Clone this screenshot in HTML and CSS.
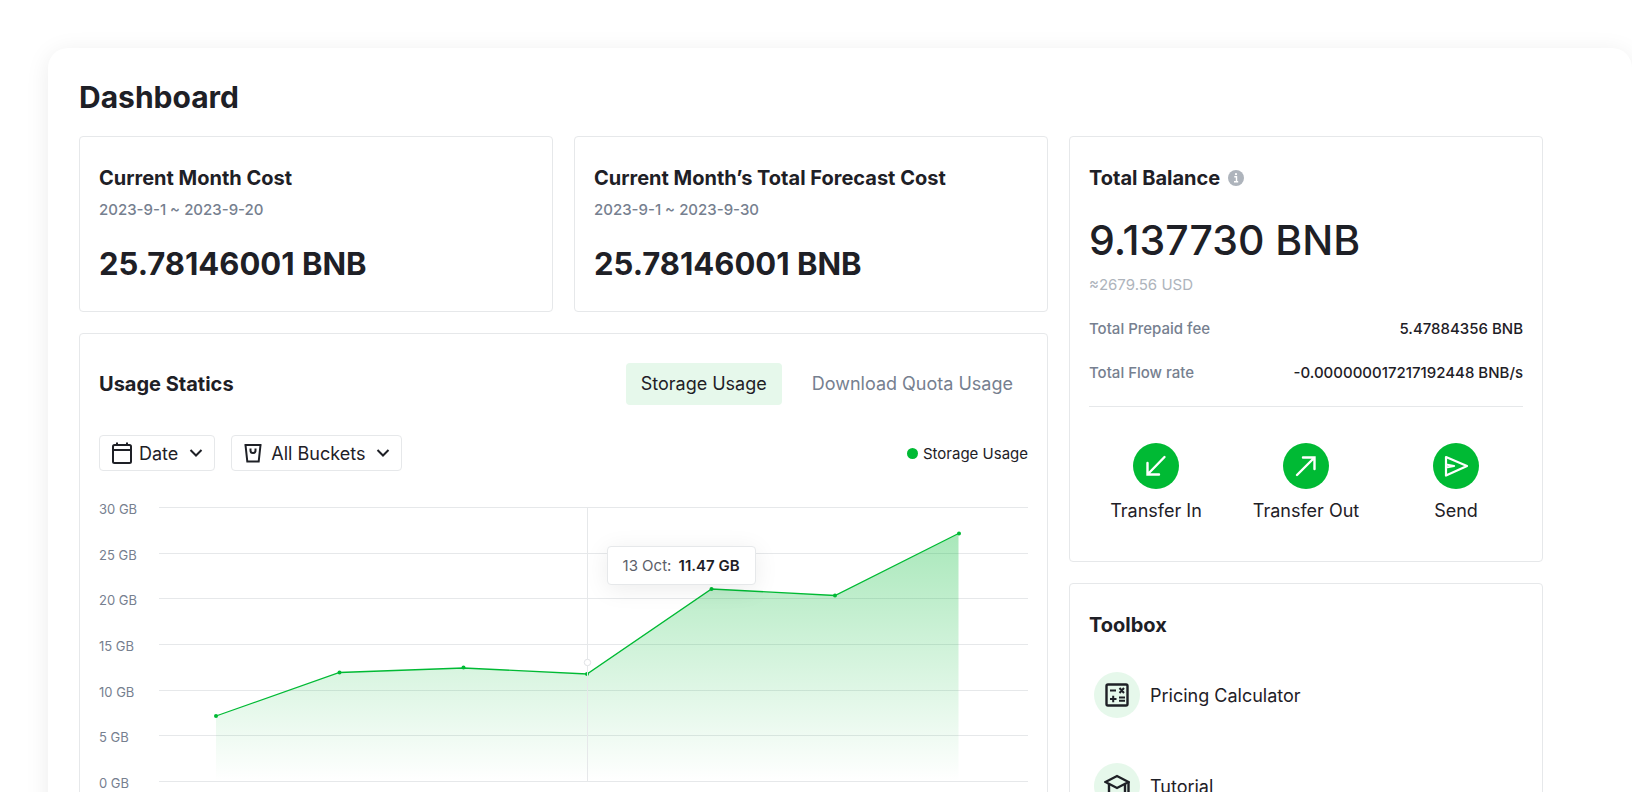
FILE: index.html
```html
<!DOCTYPE html>
<html lang="en">
<head>
  <meta charset="UTF-8" />
  <meta name="viewport" content="width=device-width, initial-scale=1.0"/>
  <title>Dashboard</title>
  <link rel="stylesheet" href="styles.css">
</head>
<body>
  <main class="panel">
    <h1 class="page-title">Dashboard</h1>

    <div class="dashboard">
      <div class="main-col">
        <div class="cost-row">
          <section class="card cost-card">
            <h2 class="card-title">Current Month Cost</h2>
            <p class="period">2023-9-1 ~ 2023-9-20</p>
            <p class="amount">25.78146001 BNB</p>
          </section>
          <section class="card cost-card">
            <h2 class="card-title">Current Month’s Total Forecast Cost</h2>
            <p class="period">2023-9-1 ~ 2023-9-30</p>
            <p class="amount">25.78146001 BNB</p>
          </section>
        </div>

        <section class="card usage-card">
          <div class="usage-head">
            <h2 class="card-title">Usage Statics</h2>
            <div class="tabs">
              <button class="tab active" type="button">Storage Usage</button>
              <button class="tab" type="button">Download Quota Usage</button>
            </div>
          </div>

          <div class="filters">
            <button class="filter" type="button">
              <svg class="filter-icon" viewBox="0 0 22 22" fill="none" stroke="currentColor" stroke-width="2">
                <rect x="2" y="3" width="18" height="18" rx="1.5"/>
                <path d="M2 8h18M6 0.5v3M16 0.5v3"/>
              </svg>
              Date
              <svg class="chevron" viewBox="0 0 14 14" fill="none" stroke="currentColor" stroke-width="2"><path d="M1.5 4l5.5 5.5L12.5 4"/></svg>
            </button>
            <button class="filter" type="button">
              <svg class="filter-icon" viewBox="0 0 22 22" fill="none" stroke="currentColor" stroke-width="2">
                <path d="M1.500 3h17M2.500 3l1.800 16.500h11.400L17.500 3"/>
                <path d="M7.500 6.500v2a2.500 2.500 0 0 0 5 0v-2"/>
              </svg>
              All Buckets
              <svg class="chevron" viewBox="0 0 14 14" fill="none" stroke="currentColor" stroke-width="2"><path d="M1.5 4l5.5 5.5L12.5 4"/></svg>
            </button>
            <div class="legend"><span class="legend-dot"></span>Storage Usage</div>
          </div>

          <div class="chart">
            <div class="axis">
              <span>30 GB</span>
              <span>25 GB</span>
              <span>20 GB</span>
              <span>15 GB</span>
              <span>10 GB</span>
              <span>5 GB</span>
              <span>0 GB</span>
            </div>
            <div class="plot">
              <svg class="plot-svg" viewBox="0 0 869 275">
                <defs>
                  <linearGradient id="area" x1="0" y1="0" x2="0" y2="1">
                    <stop offset="0" stop-color="#00ba34" stop-opacity="0.34"/>
                    <stop offset="1" stop-color="#00ba34" stop-opacity="0"/>
                  </linearGradient>
                </defs>
                <path class="grid" d="M0 0.5h869M0 46.5h869M0 91.5h869M0 137.5h869M0 183.5h869M0 228.5h869M0 274.5h869"/>
                <path fill="url(#area)" d="M57 209L180.500 165.500 304.500 161 428 167 552.500 82 676 88.500 799.500 26.500V274.500H57z"/>
                <path class="line" d="M57 209L180.500 165.500 304.500 161 428 167 552.500 82 676 88.500 799.500 26.500"/>
                <g class="dots">
                  <circle cx="57" cy="209" r="2"/>
                  <circle cx="180.500" cy="165.500" r="2"/>
                  <circle cx="304.500" cy="160.500" r="2"/>
                  <circle cx="428" cy="167" r="2"/>
                  <circle cx="552.500" cy="82" r="2"/>
                  <circle cx="676" cy="88.500" r="2"/>
                  <circle cx="800" cy="26.500" r="2"/>
                </g>
                <path class="grid" d="M428.5 0.5v274"/>
                <circle class="marker" cx="428.500" cy="155.500" r="3.200"/>
              </svg>
              <div class="tooltip">13 Oct: <b>11.47 GB</b></div>
            </div>
          </div>
        </section>
      </div>

      <div class="side-col">
        <section class="card balance-card">
          <h2 class="card-title">
            Total Balance
            <svg class="info" viewBox="0 0 16 16">
              <circle cx="8" cy="8" r="8" fill="#aeb4bc"/>
              <path d="M6.300 6.800h2.200v4.700M6 11.700h4.200" fill="none" stroke="#fff" stroke-width="1.400"/>
              <circle cx="8" cy="4.200" r="1.100" fill="#fff"/>
            </svg>
          </h2>
          <p class="balance">9.137730 BNB</p>
          <p class="fiat">≈2679.56 USD</p>
          <dl class="fees">
            <div class="fee"><dt>Total Prepaid fee</dt><dd>5.47884356 BNB</dd></div>
            <div class="fee"><dt>Total Flow rate</dt><dd>-0.000000017217192448 BNB/s</dd></div>
          </dl>
          <div class="actions">
            <button class="action" type="button">
              <span class="action-icon">
                <svg viewBox="0 0 24 24" fill="none" stroke="#fff" stroke-width="2.400" stroke-linecap="round"><path d="M20.500 3L4 20M3.500 9v11.500h11.500"/></svg>
              </span>
              Transfer In
            </button>
            <button class="action" type="button">
              <span class="action-icon">
                <svg viewBox="0 0 24 24" fill="none" stroke="#fff" stroke-width="2.400" stroke-linecap="round"><path d="M3 21L20 4M9 3.500h11.500v11.500"/></svg>
              </span>
              Transfer Out
            </button>
            <button class="action" type="button">
              <span class="action-icon">
                <svg viewBox="0 0 24 24" fill="none" stroke="#fff" stroke-width="2.200" stroke-linejoin="round"><path d="M2 3l21 9-21 9.500zM2 10.500l8 1.500-8 1.500"/></svg>
              </span>
              Send
            </button>
          </div>
        </section>

        <section class="card toolbox-card">
          <h2 class="card-title">Toolbox</h2>
          <ul class="tools">
            <li>
              <a class="tool" href="#">
                <span class="tool-icon">
                  <svg viewBox="0 0 26 26" fill="none" stroke="currentColor" stroke-width="2.400">
                    <rect x="2.500" y="2.500" width="21" height="21" rx="1.500"/>
                    <path d="M6 8.500h6M6 17h6.500M9.200 13.800v6.500M15 15.500h6M15 18.800h6M15.500 6l4.500 5M20 6l-4.500 5" stroke-width="2"/>
                  </svg>
                </span>
                Pricing Calculator
              </a>
            </li>
            <li>
              <a class="tool" href="#">
                <span class="tool-icon">
                  <svg viewBox="0 0 26 26" fill="none" stroke="currentColor" stroke-width="2.400">
                    <path d="M1.500 9L13 3l11.500 6L13 15z"/>
                    <path d="M5 11v9l8 4.500 8-4.500v-9M24.500 9v11"/>
                  </svg>
                </span>
                Tutorial
              </a>
            </li>
          </ul>
        </section>
      </div>
    </div>
  </main>
</body>
</html>
```
FILE: styles.css
```css
* {
  box-sizing: border-box;
}

body {
  margin: 0;
  height: 100vh;
  overflow: hidden;
  background: #fff;
  font-family: 'Inter', 'Liberation Sans', sans-serif;
  color: #1e2026;
}

h1, h2, p, ul, dl, dd {
  margin: 0;
  padding: 0;
}

button {
  font-family: inherit;
  color: inherit;
  background: none;
  border: none;
  padding: 0;
  cursor: pointer;
}

.panel {
  margin: 48px 0 0 48px;
  padding: 28px 89px 32px 31px;
  background: #fff;
  border-radius: 20px;
  box-shadow: 0 4px 24px rgba(0, 0, 0, 0.08);
}

.page-title {
  margin-bottom: 18px;
  font-size: 30px;
  line-height: 42px;
  font-weight: 700;
}

.dashboard {
  display: grid;
  grid-template-columns: repeat(3, minmax(0, 1fr));
  gap: 21px;
}

.main-col,
.side-col {
  display: flex;
  flex-direction: column;
  gap: 21px;
}

.main-col {
  grid-column: span 2;
}

.cost-row {
  display: grid;
  grid-template-columns: 1fr 1fr;
  gap: 21px;
}

.card {
  padding: 27px 19px;
  border: 1px solid #e6e8ea;
  border-radius: 4px;
}

.card-title {
  display: flex;
  align-items: center;
  gap: 8px;
  font-size: 20px;
  line-height: 28px;
  font-weight: 700;
}

.period {
  margin-top: 6px;
  font-size: 15px;
  line-height: 24px;
  font-weight: 500;
  color: #76808f;
}

.amount {
  margin-top: 21px;
  font-size: 31px;
  line-height: 41px;
  font-weight: 700;
}

/* Usage chart */
.usage-card {
  padding-top: 29px;
}

.usage-head {
  display: flex;
  align-items: center;
  justify-content: space-between;
}

.tabs {
  display: flex;
  gap: 15px;
}

.tab {
  padding: 8px 15px;
  border-radius: 4px;
  font-size: 18px;
  line-height: 26px;
  color: #76808f;
}

.tab.active {
  background: #e6f8eb;
  color: #1e2026;
}

.filters {
  display: flex;
  align-items: center;
  gap: 16px;
  margin-top: 30px;
}

.filter {
  display: flex;
  align-items: center;
  gap: 6px;
  height: 36px;
  padding: 0 11px;
  border: 1px solid #e6e8ea;
  border-radius: 4px;
  font-size: 18px;
}

.filter-icon {
  width: 22px;
  height: 22px;
}

.chevron {
  width: 14px;
  height: 14px;
  margin-left: 5px;
}

.legend {
  display: flex;
  align-items: center;
  gap: 5px;
  margin-left: auto;
  font-size: 15px;
}

.legend-dot {
  width: 11px;
  height: 11px;
  border-radius: 50%;
  background: #00ba34;
}

.chart {
  display: flex;
  margin-top: 36px;
}

.axis {
  display: flex;
  flex-direction: column;
  justify-content: space-between;
  width: 60px;
  margin: -7px 0 -10px;
  font-size: 13px;
  line-height: 18px;
  color: #76808f;
}

.plot {
  position: relative;
  flex: 1;
}

.plot-svg {
  display: block;
  width: 100%;
}

.grid {
  stroke: #e6e8ea;
  fill: none;
}

.line {
  fill: none;
  stroke: #00ba34;
  stroke-width: 1.3;
}

.dots {
  fill: #00ba34;
}

.marker {
  fill: #fff;
  stroke: #e0e2e5;
}

.tooltip {
  position: absolute;
  left: 51.5%;
  top: 14%;
  padding: 8px 15px;
  border: 1px solid #e6e8ea;
  border-radius: 4px;
  background: #fff;
  box-shadow: 0 4px 24px rgba(0, 0, 0, 0.08);
  font-size: 15px;
  line-height: 21px;
  color: #5c6069;
  white-space: nowrap;
}

.tooltip b {
  margin-left: 3px;
  font-weight: 600;
  color: #1e2026;
}

/* Balance */
.info {
  width: 16px;
  height: 16px;
}

.balance {
  margin-top: 20px;
  font-size: 41px;
  line-height: 56px;
  font-weight: 500;
}

.fiat {
  margin-top: 5px;
  font-size: 15px;
  line-height: 24px;
  color: #aeb4bc;
}

.fees {
  padding-bottom: 21px;
  border-bottom: 1px solid #e6e8ea;
}

.fee {
  display: flex;
  justify-content: space-between;
  margin-top: 20px;
  font-size: 15px;
  line-height: 24px;
  font-weight: 500;
}

.fee dt {
  color: #76808f;
}

.actions {
  display: flex;
  gap: 16px;
  margin-top: 36px;
  padding-bottom: 9px;
}

.action {
  display: flex;
  flex: 1;
  flex-direction: column;
  align-items: center;
  gap: 8px;
  font-size: 18px;
  line-height: 28px;
}

.action-icon {
  display: flex;
  align-items: center;
  justify-content: center;
  width: 46px;
  height: 46px;
  border-radius: 50%;
  background: #00ba34;
}

.action-icon svg {
  width: 24px;
  height: 24px;
}

/* Toolbox */
.tools {
  display: flex;
  flex-direction: column;
  gap: 45px;
  margin-top: 33px;
  padding: 0 5px;
  list-style: none;
}

.tool {
  display: flex;
  align-items: center;
  gap: 10px;
  font-size: 18px;
  color: inherit;
  text-decoration: none;
}

.tool-icon {
  display: flex;
  align-items: center;
  justify-content: center;
  width: 46px;
  height: 46px;
  border-radius: 50%;
  background: #e6f8eb;
}

.tool-icon svg {
  width: 26px;
  height: 26px;
}
```
